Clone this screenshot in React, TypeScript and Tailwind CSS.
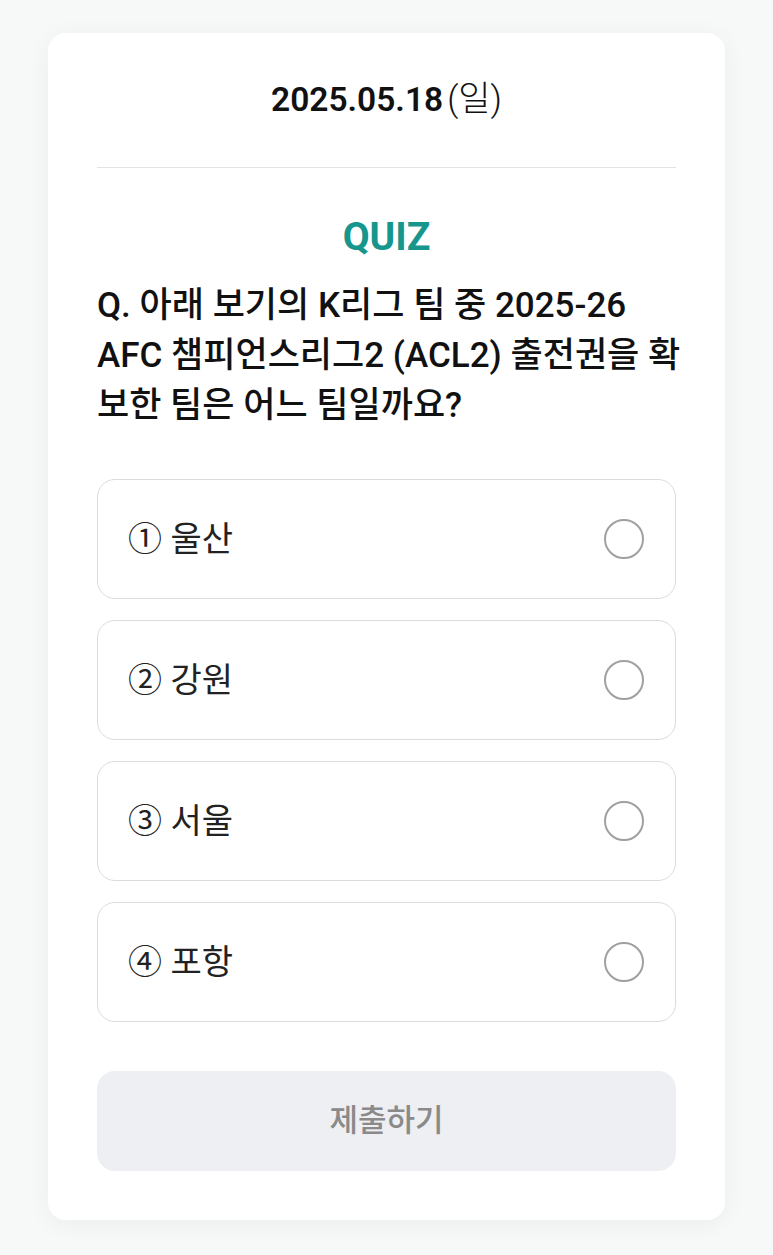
import { useState } from "react";

const options = ["울산", "강원", "서울", "포항"];
const marks = ["①", "②", "③", "④"];

export default function App() {
  const [picked, setPicked] = useState<number | null>(null);

  return (
    <div
      className="min-h-[1255px] bg-[#f7f9f9] px-[48px] pt-[33px] pb-[35px]"
      style={{ fontFamily: 'Roboto, "Noto Sans CJK KR", sans-serif' }}
    >
      <div className="rounded-[18px] bg-white px-[49px] pt-[46px] pb-[49px] shadow-[0_4px_24px_rgba(0,0,0,0.05)]">
        {/* date */}
        <div className="flex h-[42px] items-center justify-center text-[#111]">
          <span className="text-[33.5px] font-semibold">2025.05.18</span>
          <span className="ml-[4px] text-[35px] font-light">(일)</span>
        </div>

        <div className="mt-[46px] h-px bg-[#e3e3e3]" />

        <div className="mt-[46px] text-center text-[39px] leading-[46px] font-bold text-[#16968c]">
          QUIZ
        </div>

        <p className="mt-[21px] mr-[-40px] text-[35px] leading-[50px] font-medium whitespace-nowrap text-[#111]">
          Q. 아래 보기의 K리그 팀 중 2025-26
          <br />
          AFC 챔피언스리그2 (ACL2) 출전권을 확
          <br />
          보한 팀은 어느 팀일까요?
        </p>

        {/* options */}
        <div className="mt-[48px] flex flex-col gap-[21px]">
          {options.map((o, i) => (
            <button
              key={o}
              onClick={() => setPicked(i)}
              className="flex h-[120px] items-center justify-between rounded-[18px] border border-[#dcdcdc] bg-white pr-[31px] pl-[30px] text-left"
            >
              <span className="text-[34px] text-[#222]">
                {marks[i]} {o}
              </span>
              <span
                className={
                  picked === i
                    ? "h-[40px] w-[40px] rounded-full border-[10px] border-[#16968c]"
                    : "h-[40px] w-[40px] rounded-full border-2 border-[#a0a0a0]"
                }
              />
            </button>
          ))}
        </div>

        <button className="mt-[49px] flex h-[100px] w-full items-center justify-center rounded-[18px] bg-[#eeeff2] text-[31px] font-medium text-[#8a8a8a]">
          제출하기
        </button>
      </div>
    </div>
  );
}
